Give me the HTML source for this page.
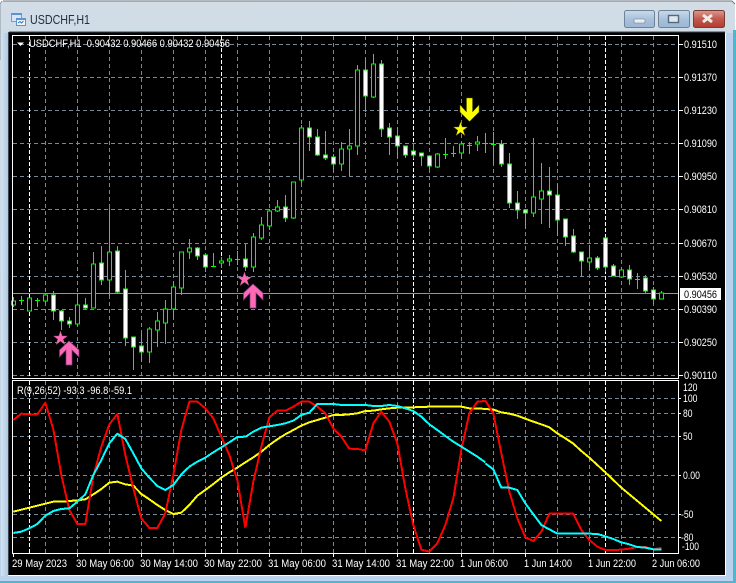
<!DOCTYPE html>
<html><head><meta charset="utf-8"><style>
html,body{margin:0;padding:0;background:#fff}
svg{display:block}
text{font-family:"Liberation Sans",sans-serif;fill:#fff;font-size:11px}
.c{shape-rendering:crispEdges}
.l{fill:none;stroke-width:2;vector-effect:non-scaling-stroke;shape-rendering:crispEdges;stroke-linejoin:round}
</style></head><body>
<svg width="736" height="583" viewBox="0 0 736 583" xmlns="http://www.w3.org/2000/svg">
<defs>
<linearGradient id="tb" x1="0" y1="0" x2="0" y2="1"><stop offset="0" stop-color="#d3dde6"/><stop offset=".06" stop-color="#cfdbe6"/><stop offset="1" stop-color="#b9d1ea"/></linearGradient>
<linearGradient id="bt" x1="0" y1="0" x2="0" y2="1"><stop offset="0" stop-color="#c9daea"/><stop offset=".5" stop-color="#a9c2dc"/><stop offset="1" stop-color="#9ab6d2"/></linearGradient>
<linearGradient id="cl" x1="0" y1="0" x2="0" y2="1"><stop offset="0" stop-color="#d99a90"/><stop offset=".5" stop-color="#c2584c"/><stop offset="1" stop-color="#b23a30"/></linearGradient>
<linearGradient id="lf" x1="0" y1="0" x2="1" y2="0"><stop offset="0" stop-color="#d5e2ee"/><stop offset="1" stop-color="#a9c6e2"/></linearGradient>
</defs>
<rect width="736" height="583" fill="#fff"/>
<path d="M3 1H732L735 4V583H0V4Z" fill="url(#tb)"/>
<path d="M3 1H732L735 4" fill="none" stroke="#6d7883"/>
<path d="M2 1L0 4V60" fill="none" stroke="#8d98a3"/>
<rect x="1" y="33" width="8" height="549" fill="url(#lf)"/>
<rect x="726" y="33" width="7" height="549" fill="#b9d1ec"/>
<rect x="1" y="576" width="732" height="6" fill="#bbd2ec"/>
<rect x="0" y="581" width="736" height="2" fill="#4db8cc"/>
<rect x="733" y="30" width="3" height="553" fill="#4db8cc"/>
<!-- icon -->
<g class="c">
<rect x="11.5" y="13.5" width="10" height="8" fill="#d6e6f6" stroke="#6f9fd0"/>
<rect x="11" y="13" width="11" height="2" fill="#5d94cf"/>
<rect x="16.5" y="18.5" width="9" height="7" fill="#eef5fc" stroke="#5d94cf"/>
<rect x="16" y="18" width="10" height="2" fill="#5d94cf"/>
</g>
<path d="M18 23l2-1.500 1.500 1.500 2-2" fill="none" stroke="#3b78b8"/>
<text x="30" y="24" style="font-size:13px;fill:#22303e" textLength="60" lengthAdjust="spacingAndGlyphs">USDCHF,H1</text>
<!-- window buttons -->
<rect x="624.500" y="10.500" width="30" height="17" rx="2" fill="url(#bt)" stroke="#6f8296"/>
<rect x="634" y="19" width="11" height="4" rx="1" fill="#e8eef4" stroke="#6a7a8a" stroke-width=".6"/>
<rect x="658.500" y="10.500" width="31" height="17" rx="2" fill="url(#bt)" stroke="#6f8296"/>
<rect x="668.500" y="15.500" width="10" height="7" fill="#dfe8f0" stroke="#56687a" stroke-width="1.400"/>
<rect x="693.500" y="10.500" width="31" height="17" rx="2" fill="url(#cl)" stroke="#7a3a34"/>
<path d="M703 15l9 7M712 15l-9 7" stroke="#f2ece8" stroke-width="3" fill="none"/>
<!-- black client -->
<rect x="9" y="32" width="716" height="543" fill="#000"/>
<path d="M8.500 32V575" stroke="#3a4552" class="c"/>
<path d="M9 32H725" stroke="#3a4552" class="c"/>
<path d="M725.500 33V575.500H8" stroke="#fff" fill="none" class="c"/>
<!-- grid main -->
<g class="c" fill="none">
<path stroke="#778899" stroke-dasharray="4 3" d="M13 44.500H678M13 77.500H678M13 110.500H678M13 143.500H678M13 176.500H678M13 209.500H678M13 243.500H678M13 276.500H678M13 309.500H678M13 342.500H678M13 375.500H678"/>
<path stroke="#778899" stroke-dasharray="4 3" d="M45.500 36V378M77.500 36V378M109.500 36V378M141.500 36V378M173.500 36V378M205.500 36V378M237.500 36V378M269.500 36V378M301.500 36V378M333.500 36V378M365.500 36V378M397.500 36V378M429.500 36V378M461.500 36V378M493.500 36V378M525.500 36V378M557.500 36V378M589.500 36V378M621.500 36V378M653.500 36V378"/>
<path stroke="#fff" stroke-dasharray="4 2" d="M29.500 36V378M221.500 36V378M413.500 36V378M605.500 36V378"/>
<path stroke="#778899" stroke-dasharray="4 3" d="M13 398.500H678M13 413.500H678M13 436.500H678M13 475.500H678M13 514.500H678M13 537.500H678"/>
<path stroke="#778899" stroke-dasharray="4 3" d="M45.500 381V553M77.500 381V553M109.500 381V553M141.500 381V553M173.500 381V553M205.500 381V553M237.500 381V553M269.500 381V553M301.500 381V553M333.500 381V553M365.500 381V553M397.500 381V553M429.500 381V553M461.500 381V553M493.500 381V553M525.500 381V553M557.500 381V553M589.500 381V553M621.500 381V553M653.500 381V553"/>
<path stroke="#fff" stroke-dasharray="4 2" d="M29.500 381V553M221.500 381V553M413.500 381V553M605.500 381V553"/>
<path stroke="#8a96a3" d="M13 293.500H678"/>
</g>
<!-- candle wicks -->
<path class="c" fill="none" stroke="#00ff00" d="M13.500 297V307M21.500 296V305M29.500 298V311M37.500 298V307M45.500 293V303M53.500 291V320M61.500 310V330M69.500 317V328M77.500 294V326M85.500 298V309M93.500 252V308M101.500 246V285M109.500 208V296M117.500 246V293M125.500 270V346M133.500 337V370M141.500 333V362M149.500 327V363M157.500 312V347M165.500 300V344M173.500 282V319M181.500 252V295M189.500 239V259M197.500 247V260M205.500 255V272M213.500 253V267M221.500 257V268M229.500 255V266M237.500 251V265M245.500 244V271M253.500 233V272M261.500 217V240M269.500 209V230M277.500 200V212M285.500 195V222M293.500 182V219M301.500 125V183M309.500 121V151M317.500 129V156M325.500 131V160M333.500 154V171M341.500 142V171M349.500 129V176M357.500 65V155M365.500 59V112M373.500 54V98M381.500 60V137M389.500 123V155M397.500 127V158M405.500 146V158M413.500 143V159M421.500 153V166M429.500 156V170M437.500 153V168M445.500 138V159M453.500 146V157M461.500 142V159M469.500 142V154M477.500 136V151M485.500 133V153M493.500 132V164M501.500 140V167M509.500 153V208M517.500 191V219M525.500 210V229M533.500 138V217M541.500 163V224M549.500 167V228M557.500 184V236M565.500 219V246M573.500 229V253M581.500 252V277M589.500 245V270M597.500 256V270M605.500 238V272M613.500 264V276M621.500 267V278M629.500 265V285M637.500 273V289M645.500 275V293M653.500 287V304M661.500 291V299"/>
<!-- doji -->
<path class="c" fill="none" stroke="#00ff00" d="M19 300.500h5M35 300.500h5M211 266.500h5M235 259.500h5M443 154.500h5M451 153.500h5M467 145.500h5M483 143.500h5M491 144.500h5M635 279.500h5"/>
<!-- hollow bodies -->
<path class="c" fill="#000" stroke="#00ff00" d="M11.500 301h4v4h-4zM27.500 298h4v13h-4zM43.500 295h4v6h-4zM75.500 305h4v19h-4zM91.500 264h4v44h-4zM107.500 252h4v28h-4zM147.500 329h4v23h-4zM155.500 321h4v9h-4zM163.500 309h4v14h-4zM171.500 287h4v22h-4zM179.500 252h4v36h-4zM187.500 248h4v4h-4zM219.500 261h4v2h-4zM227.500 259h4v2h-4zM251.500 237h4v30h-4zM259.500 225h4v13h-4zM267.500 211h4v15h-4zM275.500 207h4v4h-4zM291.500 182h4v36h-4zM299.500 128h4v52h-4zM339.500 149h4v15h-4zM347.500 146h4v3h-4zM355.500 70h4v76h-4zM371.500 64h4v33h-4zM435.500 154h4v13h-4zM459.500 144h4v9h-4zM475.500 142h4v2h-4zM531.500 197h4v16h-4zM539.500 191h4v8h-4zM587.500 258h4v4h-4zM619.500 270h4v7h-4zM659.500 293h4v6h-4z"/>
<!-- filled bodies -->
<path class="c" fill="#fff" stroke="#00ff00" d="M51.500 295h4v16h-4zM59.500 311h4v10h-4zM67.500 321h4v3h-4zM83.500 305h4v3h-4zM99.500 263h4v17h-4zM115.500 251h4v41h-4zM123.500 289h4v49h-4zM131.500 337h4v10h-4zM139.500 346h4v6h-4zM195.500 248h4v8h-4zM203.500 255h4v12h-4zM243.500 259h4v8h-4zM283.500 207h4v11h-4zM307.500 128h4v9h-4zM315.500 137h4v18h-4zM323.500 155h4v3h-4zM331.500 157h4v7h-4zM363.500 70h4v26h-4zM379.500 64h4v65h-4zM387.500 128h4v9h-4zM395.500 136h4v10h-4zM403.500 146h4v9h-4zM411.500 151h4v4h-4zM419.500 153h4v3h-4zM427.500 156h4v10h-4zM499.500 144h4v20h-4zM507.500 164h4v39h-4zM515.500 203h4v7h-4zM523.500 210h4v3h-4zM547.500 191h4v4h-4zM555.500 195h4v25h-4zM563.500 219h4v18h-4zM571.500 236h4v16h-4zM579.500 252h4v9h-4zM595.500 258h4v10h-4zM603.500 238h4v29h-4zM611.500 266h4v10h-4zM627.500 270h4v9h-4zM643.500 278h4v13h-4zM651.500 290h4v9h-4z"/>
<!-- pink arrows -->
<g fill="#ff69b4" stroke="#7a3a8a" stroke-width=".7">
<path d="M69 341L79 350V357L72 350V365H66V350L59.500 357V350Z"/>
<path d="M253 284L263 293V300L256 293V308H250V293L243.500 300V293Z"/>
</g>
<g fill="#ff69b4" stroke="#a04a80" stroke-width=".4">
<path d="M60.500 331L62.200 336H67.500L63.200 339.200L64.900 344.500L60.500 341.200L56.100 344.500L57.800 339.200L53.500 336H58.800Z"/>
<path d="M244.500 272L246.200 277H251.500L247.200 280.200L248.900 285.500L244.500 282.200L240.100 285.500L241.800 280.200L237.500 277H242.800Z"/>
</g>
<path d="M469.500 121.500L479 112V105L472.500 112V98H466.500V112L460 105V112Z" fill="#ff0" stroke="#5a6a00" stroke-width=".5"/>
<path d="M460.500 122L462.200 127H467.500L463.200 130.200L464.900 135.500L460.500 132.200L456.100 135.500L457.800 130.200L453.500 127H458.800Z" fill="#ff0" stroke="#6a6a00" stroke-width=".4"/>
<!-- frames -->
<g class="c" fill="none" stroke="#fff">
<rect x="12.500" y="35.500" width="666" height="343"/>
<rect x="12.500" y="380.500" width="666" height="173"/>
<path d="M678 44.500h5M678 77.500h5M678 110.500h5M678 143.500h5M678 176.500h5M678 209.500h5M678 243.500h5M678 276.500h5M678 309.500h5M678 342.500h5M678 375.500h5"/>
<path d="M678 398.500h3M678 413.500h3M678 436.500h3M678 475.500h3M678 514.500h3M678 537.500h3"/>
<path d="M13.500 553v4M77.500 553v4M141.500 553v4M205.500 553v4M269.500 553v4M333.500 553v4M397.500 553v4M461.500 553v4M525.500 553v4M589.500 553v4M653.500 553v4"/>
</g>
<!-- indicator lines -->
<g transform="translate(0,375) scale(.33333)">
<polyline class="l" stroke="#ffff00" points="40,410 64,404 88,398 112,392 136,386 160,380 184,380 208,378 232,376 256,373 280,358 304,342 328,323 352,320 376,328 400,332 424,357 448,373 472,390 496,405 520,417 544,413 568,390 592,362 616,345 640,327 664,308 688,292 712,278 736,262"/>
<polyline class="l" stroke="#ff0000" points="40,135 64,116 88,118 112,118 136,83 160,163 184,300 208,405 232,447 256,447 280,304 304,215 328,148 352,117 376,240 400,340 424,430 448,459 472,459 496,415 520,300 544,165 568,80 592,80 616,100 640,130 664,185 688,240 712,315 736,458"/>
<polyline class="l" stroke="#00ffff" points="40,474 64,470 88,460 112,447 136,422 160,408 184,402 208,400 232,380 256,358 280,300 304,255 328,205 352,176 376,192 400,235 424,280 448,308 472,333 496,345 520,330 544,298 568,275 592,260 616,248 640,232 664,217 688,202 712,186 736,185"/>
</g>
<g transform="translate(240,375) scale(.33333)">
<polyline class="l" stroke="#ffff00" points="16,262 40,247 64,230 88,210 112,193 136,178 160,165 184,152 208,142 232,135 256,128 280,120 304,120 328,118 352,115 376,108 400,107 424,103 448,100 472,98 496,97 520,97 544,96 568,95 592,95 616,95 640,95 664,95 688,100 712,100 736,102"/>
<polyline class="l" stroke="#ff0000" points="16,458 40,320 64,215 88,127 112,107 136,107 160,95 184,80 208,80 232,95 256,115 280,160 304,185 328,221 352,222 376,226 400,145 424,110 448,140 472,205 496,340 520,450 544,524 568,530 592,505 616,450 640,370 664,225 688,115 712,80 736,78"/>
<polyline class="l" stroke="#00ffff" points="16,186 40,170 64,158 88,154 112,150 136,145 160,137 184,120 208,113 232,87 256,87 280,87 304,90 328,90 352,90 376,90 400,93 424,93 448,90 472,93 496,100 520,108 544,125 568,148 592,165 616,183 640,200 664,215 688,230 712,245 736,262"/>
</g>
<g transform="translate(486,375) scale(.33333)">
<polyline class="l" stroke="#ffff00" points="-2,102 22,104 46,112 70,116 94,122 118,131 142,140 166,148 190,157 214,175 238,190 262,206 286,228 310,248 334,270 358,292 382,315 406,338 430,358 454,378 478,398 502,418 526,438"/>
<polyline class="l" stroke="#ff0000" points="-2,77 22,115 46,235 70,350 94,430 118,487 142,498 166,470 190,416 214,416 238,416 262,416 286,465 310,495 334,515 358,525 382,525 406,524 430,521 454,516 478,516 502,523 526,519"/>
<polyline class="l" stroke="#00ffff" points="-2,265 22,283 46,338 70,338 94,345 118,385 142,418 166,450 190,463 214,476 238,476 262,476 286,476 310,476 334,477 358,484 382,492 406,502 430,508 454,516 478,518 502,523 526,524"/>
</g>
<!-- price tag -->
<rect x="680" y="288" width="41" height="12" fill="#fff"/>
<text x="684" y="298" style="fill:#000" textLength="33" lengthAdjust="spacingAndGlyphs">0.90456</text>
<!-- text -->
<path d="M17 42.500h7l-3.500 3.500z" fill="#fff"/>
<text x="29" y="47" xml:space="preserve" textLength="201" lengthAdjust="spacingAndGlyphs">USDCHF,H1  0.90432 0.90466 0.90432 0.90456</text>
<text x="17" y="394" textLength="115" lengthAdjust="spacingAndGlyphs">R(9,26,52) -93.3 -96.8 -59.1</text>
<g>
<text x="684" y="48" textLength="33" lengthAdjust="spacingAndGlyphs">0.91510</text>
<text x="684" y="81" textLength="33" lengthAdjust="spacingAndGlyphs">0.91370</text>
<text x="684" y="114" textLength="33" lengthAdjust="spacingAndGlyphs">0.91230</text>
<text x="684" y="147" textLength="33" lengthAdjust="spacingAndGlyphs">0.91090</text>
<text x="684" y="180" textLength="33" lengthAdjust="spacingAndGlyphs">0.90950</text>
<text x="684" y="213" textLength="33" lengthAdjust="spacingAndGlyphs">0.90810</text>
<text x="684" y="247" textLength="33" lengthAdjust="spacingAndGlyphs">0.90670</text>
<text x="684" y="280" textLength="33" lengthAdjust="spacingAndGlyphs">0.90530</text>
<text x="684" y="313" textLength="33" lengthAdjust="spacingAndGlyphs">0.90390</text>
<text x="684" y="346" textLength="33" lengthAdjust="spacingAndGlyphs">0.90250</text>
<text x="684" y="379" textLength="33" lengthAdjust="spacingAndGlyphs">0.90110</text>
<text x="683" y="391" textLength="14.500" lengthAdjust="spacingAndGlyphs">120</text>
<text x="683" y="402" textLength="14.500" lengthAdjust="spacingAndGlyphs">100</text>
<text x="683" y="417" textLength="9.500" lengthAdjust="spacingAndGlyphs">80</text>
<text x="683" y="440" textLength="9.500" lengthAdjust="spacingAndGlyphs">50</text>
<text x="683" y="479" textLength="17" lengthAdjust="spacingAndGlyphs">0.00</text>
<text x="681" y="518" textLength="12.500" lengthAdjust="spacingAndGlyphs">-50</text>
<text x="681" y="541" textLength="12.500" lengthAdjust="spacingAndGlyphs">-80</text>
<text x="682" y="550" textLength="17" lengthAdjust="spacingAndGlyphs">-100</text>
<text x="12" y="567" textLength="55" lengthAdjust="spacingAndGlyphs">29 May 2023</text>
<text x="76" y="567" textLength="58" lengthAdjust="spacingAndGlyphs">30 May 06:00</text>
<text x="140" y="567" textLength="58" lengthAdjust="spacingAndGlyphs">30 May 14:00</text>
<text x="204" y="567" textLength="58" lengthAdjust="spacingAndGlyphs">30 May 22:00</text>
<text x="268" y="567" textLength="58" lengthAdjust="spacingAndGlyphs">31 May 06:00</text>
<text x="332" y="567" textLength="58" lengthAdjust="spacingAndGlyphs">31 May 14:00</text>
<text x="396" y="567" textLength="58" lengthAdjust="spacingAndGlyphs">31 May 22:00</text>
<text x="460" y="567" textLength="48" lengthAdjust="spacingAndGlyphs">1 Jun 06:00</text>
<text x="524" y="567" textLength="48" lengthAdjust="spacingAndGlyphs">1 Jun 14:00</text>
<text x="588" y="567" textLength="48" lengthAdjust="spacingAndGlyphs">1 Jun 22:00</text>
<text x="652" y="567" textLength="48" lengthAdjust="spacingAndGlyphs">2 Jun 06:00</text>
</g>
</svg>
</body></html>
